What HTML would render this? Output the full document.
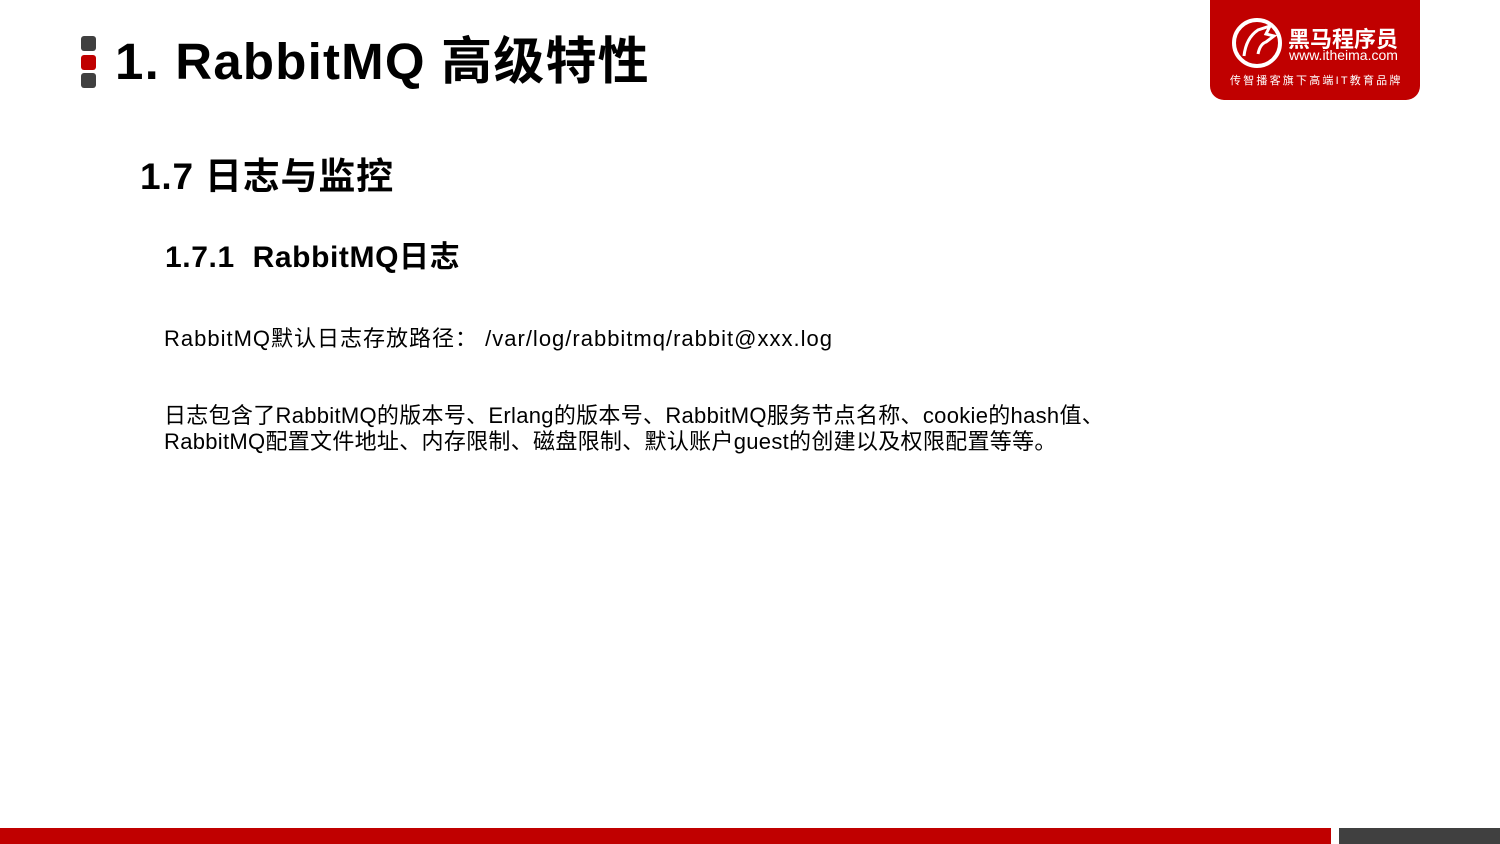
<!DOCTYPE html>
<html><head><meta charset="utf-8"><style>
body{margin:0;width:1500px;height:844px;position:relative;background:#fff;font-family:"Liberation Sans","Noto Sans CJK SC",sans-serif;overflow:hidden;color:#000}
.t{position:absolute;white-space:nowrap}
.sq{position:absolute;left:81px;width:15px;height:15px;border-radius:3px;background:#404040}
</style></head><body>
<div class="sq" style="top:36px"></div>
<div class="sq" style="top:55px;background:#c00000"></div>
<div class="sq" style="top:73px"></div>
<div class="t" style="left:115px;top:20px;font-size:51px;font-weight:bold;letter-spacing:1.2px">1. RabbitMQ 高级特性</div>
<div class="t" style="left:140px;top:146px;font-size:37px;font-weight:bold;letter-spacing:0.8px">1.7 日志与监控</div>
<div class="t" style="left:165px;top:232px;font-size:30px;font-weight:bold;letter-spacing:0.6px">1.7.1&nbsp; RabbitMQ日志</div>
<div class="t" style="left:164px;top:321px;font-size:22px;letter-spacing:1px">RabbitMQ默认日志存放路径： /var/log/rabbitmq/rabbit@xxx.log</div>
<div class="t" style="left:164px;top:403px;font-size:22px;line-height:26px;letter-spacing:0.3px">日志包含了RabbitMQ的版本号、Erlang的版本号、RabbitMQ服务节点名称、cookie的hash值、<br>RabbitMQ配置文件地址、内存限制、磁盘限制、默认账户guest的创建以及权限配置等等。</div>
<div style="position:absolute;left:1210px;top:0;width:210px;height:100px;background:#c00000;border-radius:0 0 14px 14px">
<svg style="position:absolute;left:20px;top:16px" width="54" height="54" viewBox="0 0 54 54"><circle cx="27" cy="27" r="23" fill="none" stroke="#fff" stroke-width="4"/><path d="M14 40 Q16 22 28 14 L40 10 L36 18 L44 20 L36 26 Q30 28 28 38" fill="none" stroke="#fff" stroke-width="3"/></svg>
<div class="t" style="left:78px;top:22px;color:#fff;font-size:22px;font-weight:bold">黑马程序员</div>
<div class="t" style="left:79px;top:47px;color:#fff;font-size:14px">www.itheima.com</div>
<div class="t" style="left:20px;top:72px;color:#fff;font-size:11px;letter-spacing:2.2px">传智播客旗下高端IT教育品牌</div>
</div>
<div style="position:absolute;left:0;top:828px;width:1331px;height:16px;background:#c00000"></div>
<div style="position:absolute;left:1339px;top:828px;width:161px;height:16px;background:#404040"></div>
</body></html>
